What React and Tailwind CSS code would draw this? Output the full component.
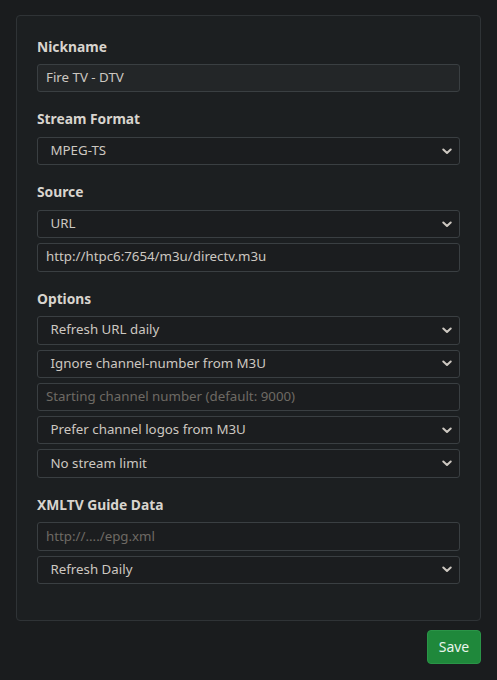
import React from "react";

function Chevron() {
  return (
    <svg width="10" height="7" viewBox="0 0 10 7" className="shrink-0">
      <path d="M1.3 1.5 L5 5 L8.7 1.5" fill="none" stroke="#cdc8c1" strokeWidth="2" strokeLinecap="round" strokeLinejoin="round" />
    </svg>
  );
}

function Select({ value }) {
  return (
    <div className="flex h-[28.3px] items-center justify-between rounded-[3px] border border-[#3a3f42] bg-[#1b1d1f] pl-[12.5px] pr-[7px] text-[13.3px] text-[#cdc8c1]">
      <span>{value}</span>
      <Chevron />
    </div>
  );
}

function Input({ value, placeholder, readOnly }) {
  return (
    <div
      className={
        "flex h-[28.3px] items-center rounded-[3px] border border-[#3a3f42] pl-[8px] text-[13.3px] " +
        (readOnly ? "bg-[#232628] " : "bg-[#1b1d1f] ") +
        (value ? "text-[#cdc8c1]" : "text-[#6e6a64]")
      }
    >
      {value || placeholder}
    </div>
  );
}

function Group({ label, children, last }) {
  return (
    <div className={last ? "" : "mb-[17.2px]"}>
      <div className="mb-[8px] text-[13.8px] font-bold leading-[19.5px] text-[#d8d4ce]">{label}</div>
      <div className="flex flex-col gap-[5px]">{children}</div>
    </div>
  );
}

export default function App() {
  return (
    <div
      className="min-h-[680px] w-full bg-[#1a1c1e] px-[16px] pt-[15px]"
      style={{ fontFamily: '"Noto Sans", "Open Sans", sans-serif' }}
    >
      <div className="rounded-[4px] border border-[#2f3336] bg-[#1c1f21] px-[20px] pb-[35.7px] pt-[20.5px]">
        <Group label="Nickname">
          <Input value="Fire TV - DTV" readOnly />
        </Group>
        <Group label="Stream Format">
          <Select value="MPEG-TS" />
        </Group>
        <Group label="Source">
          <Select value="URL" />
          <Input value="http://htpc6:7654/m3u/directv.m3u" />
        </Group>
        <Group label="Options">
          <Select value="Refresh URL daily" />
          <Select value="Ignore channel-number from M3U" />
          <Input placeholder="Starting channel number (default: 9000)" />
          <Select value="Prefer channel logos from M3U" />
          <Select value="No stream limit" />
        </Group>
        <Group label="XMLTV Guide Data" last>
          <Input placeholder="http://..../epg.xml" />
          <Select value="Refresh Daily" />
        </Group>
      </div>
      <div className="mt-[9px] flex justify-end">
        <button className="h-[34px] w-[54px] rounded-[4px] border border-[#2a9447] bg-[#1f883b] text-[14px] text-[#e8f5ec]">
          Save
        </button>
      </div>
    </div>
  );
}
